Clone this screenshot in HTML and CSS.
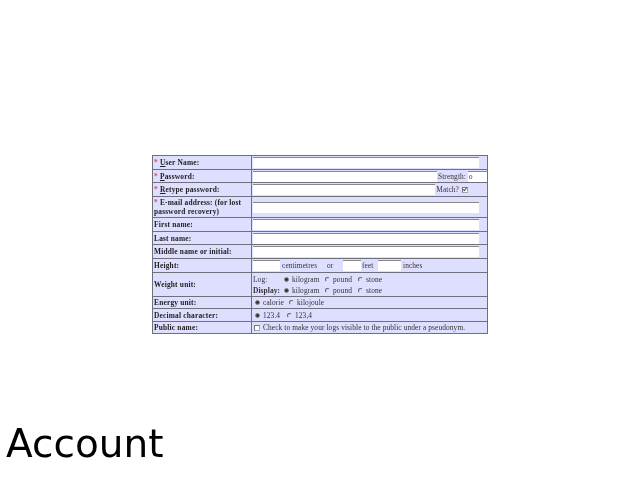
FILE: index.html
```html
<!DOCTYPE html>
<html lang="en">
<head>
<meta charset="utf-8">
<title>Account</title>
<link rel="stylesheet" href="styles.css">
</head>
<body>
<form class="account-form">
<table class="form-table">
<colgroup><col class="col-label"><col class="col-field"></colgroup>
<tr class="h14"><th><span class="req">*</span> <u>U</u>ser Name:</th><td><div class="line"><input class="text grow" type="text"></div></td></tr>
<tr class="h13"><th><span class="req">*</span> <u>P</u>assword:</th><td class="flush"><div class="line"><input class="text grow" type="text"><span class="tail">Strength:</span><input class="text strength" type="text" value="0"></div></td></tr>
<tr class="h14"><th><span class="req">*</span> <u>R</u>etype password:</th><td class="flush"><div class="line"><input class="text grow" type="text"><span class="tail">Match?</span><input class="check match" type="checkbox" checked></div></td></tr>
<tr class="h21"><th><span class="req">*</span> E-mail address: (for lost password recovery)</th><td><div class="line"><input class="text grow" type="text"></div></td></tr>
<tr class="h14"><th>First name:</th><td><div class="line"><input class="text grow" type="text"></div></td></tr>
<tr class="h13"><th>Last name:</th><td><div class="line"><input class="text grow" type="text"></div></td></tr>
<tr class="h14"><th>Middle name or initial:</th><td><div class="line"><input class="text grow" type="text"></div></td></tr>
<tr class="h14"><th>Height:</th><td class="flush"><div class="line"><input class="text cm" type="text"><span class="lbl-cm">centimetres</span><span class="lbl-or">or</span><input class="text ft" type="text"><span class="lbl-ft">feet</span><input class="text in" type="text"><span class="lbl-in">inches</span></div></td></tr>
<tr class="h24"><th>Weight unit:</th><td>
<div class="weight"><span class="wname">Log:</span><input class="radio" type="radio" name="a" checked><span class="kg">kilogram</span><input class="radio" type="radio" name="a"><span class="lb">pound</span><input class="radio" type="radio" name="a"><span>stone</span></div>
<div class="weight"><span class="wname strong">Display:</span><input class="radio" type="radio" name="b" checked><span class="kg">kilogram</span><input class="radio" type="radio" name="b"><span class="lb">pound</span><input class="radio" type="radio" name="b"><span>stone</span></div>
</td></tr>
<tr class="h12"><th>Energy unit:</th><td><div class="line pad"><input class="radio" type="radio" name="c" checked><span class="cal">calorie</span><input class="radio" type="radio" name="c"><span>kilojoule</span></div></td></tr>
<tr class="h13"><th>Decimal character:</th><td><div class="line pad"><input class="radio" type="radio" name="d" checked><span class="dec">123.4</span><input class="radio" type="radio" name="d"><span>123,4</span></div></td></tr>
<tr class="h12"><th>Public name:</th><td><div class="line"><input class="check" type="checkbox"><span class="public">Check to make your logs visible to the public under a pseudonym.</span></div></td></tr>
</table>
</form>
<h1 class="page-title">Account</h1>
</body>
</html>
```
FILE: styles.css
```css
html, body { margin: 0; height: 100%; background: #fff; }
body { display: flex; flex-direction: column; height: 480px; overflow: hidden; }
.account-form { margin: 155px auto 0; filter: blur(0.6px); }
.form-table {
  width: 335px; table-layout: fixed; border-collapse: collapse;
  font: 7.4px/9px "Liberation Serif", serif; color: #333;
  background: #dedeff; border: 1px solid #999;
}
.col-label { width: 99px; }
.col-field { width: 236px; }
.form-table th, .form-table td { border: 1px solid #70707c; padding: 0 0 0 1px; vertical-align: middle; letter-spacing: 0.1px; }
.form-table td.flush { padding-right: 0; }
.form-table th { font-weight: bold; text-align: left; color: #222; letter-spacing: 0.2px; }
.h12 { height: 12px; } .h13 { height: 13px; } .h14 { height: 14px; } .h21 { height: 21px; } .h24 { height: 24px; }
.req { color: #e04060; }
.line { display: flex; align-items: center; }
.pad { padding-left: 2px; }
.text { box-sizing: border-box; height: 11px; margin: 0; padding: 0 0 0 1px; border: 0; border-top: 1px solid #888; background: #fff; font: 7px "Liberation Serif", serif; color: #333; min-width: 0; }
.grow { flex: 0 0 226px; }
.flush .grow { flex: 1 1 auto; }
.tail { margin: 0 2px 0 1px; }
.strength { width: 19px; flex: none; }
.check, .radio { appearance: none; -webkit-appearance: none; box-sizing: border-box; position: relative; flex: none; background: #fff; }
.check { width: 6px; height: 6px; margin: 0 3px 0 1px; border: 1px solid #aaa; border-top-color: #777; border-left-color: #777; }
.match { margin-right: 19px; }
.check:checked::after { content: ""; position: absolute; left: 1px; top: -1px; width: 1px; height: 3px; border: solid #444; border-width: 0 1px 1px 0; transform: rotate(40deg); }
.radio { width: 5px; height: 5px; margin: 0 3px 0 0; border-radius: 50%; border: 1px solid #dedeff; border-top-color: #666; border-left-color: #666; background: transparent; }
.radio:checked { background: #333; border-color: #888; }
.cm { width: 27px; flex: none; }
.lbl-cm { margin-left: 2px; width: 45px; }
.lbl-or { width: 16px; }
.ft { width: 18px; flex: none; }
.lbl-ft { margin-left: 1px; width: 16px; }
.in { width: 23px; flex: none; }
.lbl-in { margin-left: 2px; }
.weight { display: flex; align-items: center; height: 11px; }
.wname { width: 31px; }
.strong { font-weight: bold; }
.kg { width: 33px; }
.lb { width: 25px; }
.cal { width: 26px; }
.dec { width: 24px; }
.public { white-space: nowrap; }
.page-title { margin: auto 0 13px 6px; font: 400 39px/46px "DejaVu Sans", sans-serif; color: #000; filter: blur(0.3px); }
```
